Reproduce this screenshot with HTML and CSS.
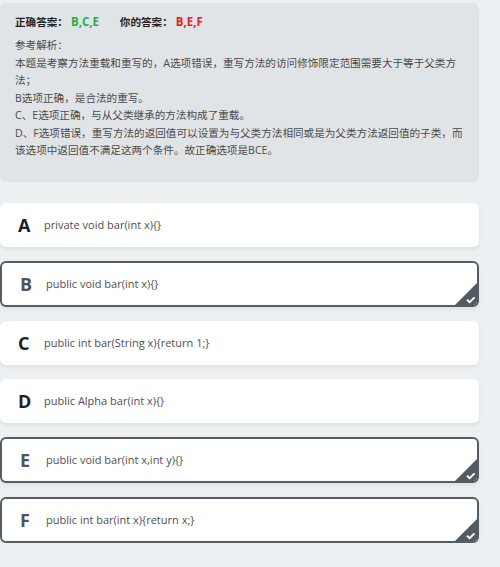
FILE: index.html
```html
<!DOCTYPE html>
<html lang="zh-CN">
<head>
  <meta charset="UTF-8">
  <meta name="viewport" content="width=device-width, initial-scale=1.0">
  <title>答案解析</title>
  <link rel="stylesheet" href="styles.css">
</head>
<body>
  <div class="analysis">
    <div class="answer-line">
      <span class="label">正确答案：</span><span class="right">B,C,E</span>
      <span class="label mine">你的答案：</span><span class="wrong">B,E,F</span>
    </div>
    <div class="explain">
      <p>参考解析：</p>
      <p>本题是考察方法重载和重写的，A选项错误，重写方法的访问修饰限定范围需要大于等于父类方<br>法；</p>
      <p>B选项正确，是合法的重写。</p>
      <p>C、E选项正确，与从父类继承的方法构成了重载。</p>
      <p>D、F选项错误，重写方法的返回值可以设置为与父类方法相同或是为父类方法返回值的子类，而<br>该选项中返回值不满足这两个条件。故正确选项是BCE。</p>
    </div>
  </div>

  <div class="options">
    <div class="option">
      <span class="letter">A</span>
      <span class="code">private void bar(int x){}</span>
    </div>
    <div class="option selected">
      <span class="letter">B</span>
      <span class="code">public void bar(int x){}</span>
      <svg class="tick" width="22" height="22" viewBox="0 0 22 22"><polygon points="22,0 22,22 0,22" fill="#525b64"/><path d="M12 16.8 L14.6 19.2 L19.6 14.4" fill="none" stroke="#fff" stroke-width="2"/></svg>
    </div>
    <div class="option">
      <span class="letter">C</span>
      <span class="code">public int bar(String x){return 1;}</span>
    </div>
    <div class="option">
      <span class="letter">D</span>
      <span class="code">public Alpha bar(int x){}</span>
    </div>
    <div class="option selected">
      <span class="letter">E</span>
      <span class="code">public void bar(int x,int y){}</span>
      <svg class="tick" width="22" height="22" viewBox="0 0 22 22"><polygon points="22,0 22,22 0,22" fill="#525b64"/><path d="M12 16.8 L14.6 19.2 L19.6 14.4" fill="none" stroke="#fff" stroke-width="2"/></svg>
    </div>
    <div class="option selected">
      <span class="letter">F</span>
      <span class="code">public int bar(int x){return x;}</span>
      <svg class="tick" width="22" height="22" viewBox="0 0 22 22"><polygon points="22,0 22,22 0,22" fill="#525b64"/><path d="M12 16.8 L14.6 19.2 L19.6 14.4" fill="none" stroke="#fff" stroke-width="2"/></svg>
    </div>
  </div>
</body>
</html>
```

FILE: styles.css
```css
body {
  margin: 0;
  padding: 3px 0 0;
  background: #edf0f3;
  font-family: "Open Sans", "Noto Sans CJK SC", sans-serif;
}
.analysis {
  width: 479px;
  box-sizing: border-box;
  background: #e1e4e7;
  border-radius: 6px;
  padding: 10px 15px 22px;
}
.answer-line {
  font-size: 10.6px;
  line-height: 18px;
  font-weight: bold;
  color: #222;
  white-space: nowrap;
}
.answer-line .right {
  color: #1fb141;
  font-size: 11.5px;
  margin-left: 3px;
}
.answer-line .mine {
  margin-left: 18px;
}
.answer-line .wrong {
  color: #f21919;
  font-size: 11.5px;
  margin-left: 3px;
}
.explain {
  margin-top: 6px;
  font-size: 10.6px;
  line-height: 17.5px;
  color: #4a4a4a;
  white-space: nowrap;
}
.explain p {
  margin: 0;
}
.options {
  margin-top: 21px;
  width: 479px;
  display: flex;
  flex-direction: column;
  gap: 14px;
}
.option {
  position: relative;
  height: 44px;
  box-sizing: border-box;
  display: flex;
  align-items: center;
  padding-left: 18px;
  background: #fff;
  border-radius: 6px;
  box-shadow: 0 2px 4px rgba(0, 0, 0, 0.07);
  overflow: hidden;
}
.option.selected {
  height: 46px;
  border: 2px solid #555e67;
}
.letter {
  width: 26px;
  font-size: 18px;
  font-weight: bold;
  color: #1d2126;
}
.selected .letter {
  color: #4c555e;
}
.code {
  font-size: 11px;
  color: #505050;
}
.tick {
  position: absolute;
  right: 0;
  bottom: 0;
}
```
